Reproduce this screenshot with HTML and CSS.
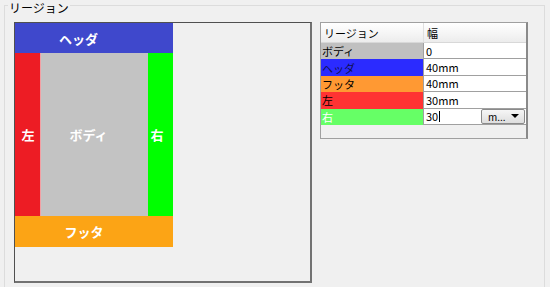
FILE: index.html
```html
<!DOCTYPE html>
<html lang="ja">
<head>
<meta charset="utf-8">
<link rel="stylesheet" href="styles.css">
</head>
<body>
<div class="group">
  <span class="legend">リージョン</span>
  <div class="canvas">
    <div class="page">
      <div class="r-header">ヘッダ</div>
      <div class="middle">
        <div class="r-left">左</div>
        <div class="r-body">ボディ</div>
        <div class="r-right">右</div>
      </div>
      <div class="r-footer">フッタ</div>
    </div>
  </div>
  <div class="grid">
    <div class="row head">
      <div class="c1">リージョン</div>
      <div class="c2">幅</div>
    </div>
    <div class="row">
      <div class="c1 body-c">ボディ</div>
      <div class="c2">0</div>
    </div>
    <div class="row">
      <div class="c1 header-c">ヘッダ</div>
      <div class="c2">40mm</div>
    </div>
    <div class="row">
      <div class="c1 footer-c">フッタ</div>
      <div class="c2">40mm</div>
    </div>
    <div class="row">
      <div class="c1 left-c">左</div>
      <div class="c2">30mm</div>
    </div>
    <div class="row">
      <div class="c1 right-c">右</div>
      <div class="c2 edit">
        <div class="input">30<span class="caret"></span></div>
        <div class="unit">m...<span class="arrow"></span></div>
      </div>
    </div>
  </div>
</div>
</body>
</html>
```
FILE: styles.css
```css
html, body {
  margin: 0;
  padding: 0;
  background: #f0f0f0;
  width: 550px;
  height: 287px;
  overflow: hidden;
  font-family: "Noto Sans CJK JP", "Noto Sans", sans-serif;
}

.group {
  position: relative;
  margin: 5px 0 0 4px;
  width: 541px;
  height: 282px;
  box-sizing: border-box;
  border: 1px solid #dcdcdc;
  border-bottom: none;
  padding: 16px 0 0 9px;
  display: flex;
  align-items: flex-start;
  gap: 8px;
}

.legend {
  position: absolute;
  top: -6px;
  left: 3px;
  padding: 0 1px;
  background: #f0f0f0;
  font-size: 12px;
  line-height: 15px;
  color: #000;
}

.canvas {
  width: 298px;
  height: 261px;
  box-sizing: border-box;
  border-style: solid;
  border-width: 1px 2px 2px 1px;
  border-color: #505050 #727272 #727272 #505050;
  background: #f0f0f0;
}

.page {
  width: 158px;
  display: flex;
  flex-direction: column;
  color: #fff;
  font-weight: bold;
  font-size: 13px;
}

.r-header {
  height: 30px;
  background: #3f48cc;
  display: flex;
  align-items: center;
  justify-content: center;
  padding-right: 31px;
  box-sizing: border-box;
}

.middle {
  height: 163px;
  display: flex;
}

.r-left, .r-body, .r-right {
  display: flex;
  align-items: center;
  justify-content: center;
  box-sizing: border-box;
}

.r-left {
  width: 26px;
  background: #ed1c24;
  border-right: 1px solid #f2a0a4;
  padding-left: 1px;
}

.r-body {
  width: 107px;
  background: #c3c3c3;
  padding-right: 12px;
}

.r-right {
  width: 25px;
  background: #00ff00;
  padding-right: 7px;
}

.r-footer {
  height: 31px;
  background: #fca415;
  display: flex;
  align-items: center;
  justify-content: center;
  padding-right: 20px;
  box-sizing: border-box;
}

.grid {
  width: 208px;
  height: 117px;
  box-sizing: border-box;
  border: 1px solid #a0a0a0;
  border-right: 2px solid #8a8a8a;
  background: #f0f0f0;
  font-size: 11px;
  color: #000;
}

.row {
  display: flex;
  height: 16.4px;
  box-sizing: border-box;
}

.row.head {
  height: 20px;
  background: linear-gradient(#ffffff, #f4f4f4 60%, #ececec);
  border-bottom: 1px solid #d8d8d8;
}

.c1, .c2 {
  display: flex;
  align-items: center;
  white-space: nowrap;
  overflow: hidden;
}

.c1 {
  width: 102px;
  padding-left: 1px;
  box-sizing: border-box;
}

.c2 {
  flex: 1;
  padding-left: 2px;
  background: #fff;
  border-left: 1px solid #a0a0a0;
  border-bottom: 1px solid #a0a0a0;
}

.head .c1 {
  padding-left: 3px;
}

.head .c2 {
  background: transparent;
  border-left: 1px solid #e0e0e0;
  border-bottom: none;
  padding-left: 3px;
}

.body-c { background: #c0c0c0; }
.header-c { background: #2b2bff; color: #101050; }
.footer-c { background: #ff9933; }
.left-c { background: #ff3333; }
.right-c { background: #66ff66; color: #fff; }

.c2.edit {
  padding-left: 0;
  background: #fff;
  gap: 1px;
}

.input {
  width: 56px;
  height: 100%;
  padding-left: 2px;
  box-sizing: border-box;
  display: flex;
  align-items: center;
}

.caret {
  display: inline-block;
  width: 1px;
  height: 11px;
  background: #000;
  margin-left: 1px;
}

.unit {
  width: 44px;
  height: 15px;
  box-sizing: border-box;
  border: 1px solid #8a8a8a;
  border-radius: 2px;
  background: linear-gradient(#f6f6f6, #dedede);
  display: flex;
  align-items: center;
  justify-content: space-between;
  padding: 0 5px 0 6px;
  font-size: 10px;
}

.arrow {
  width: 0;
  height: 0;
  border-left: 4px solid transparent;
  border-right: 4px solid transparent;
  border-top: 4px solid #000;
}
```
